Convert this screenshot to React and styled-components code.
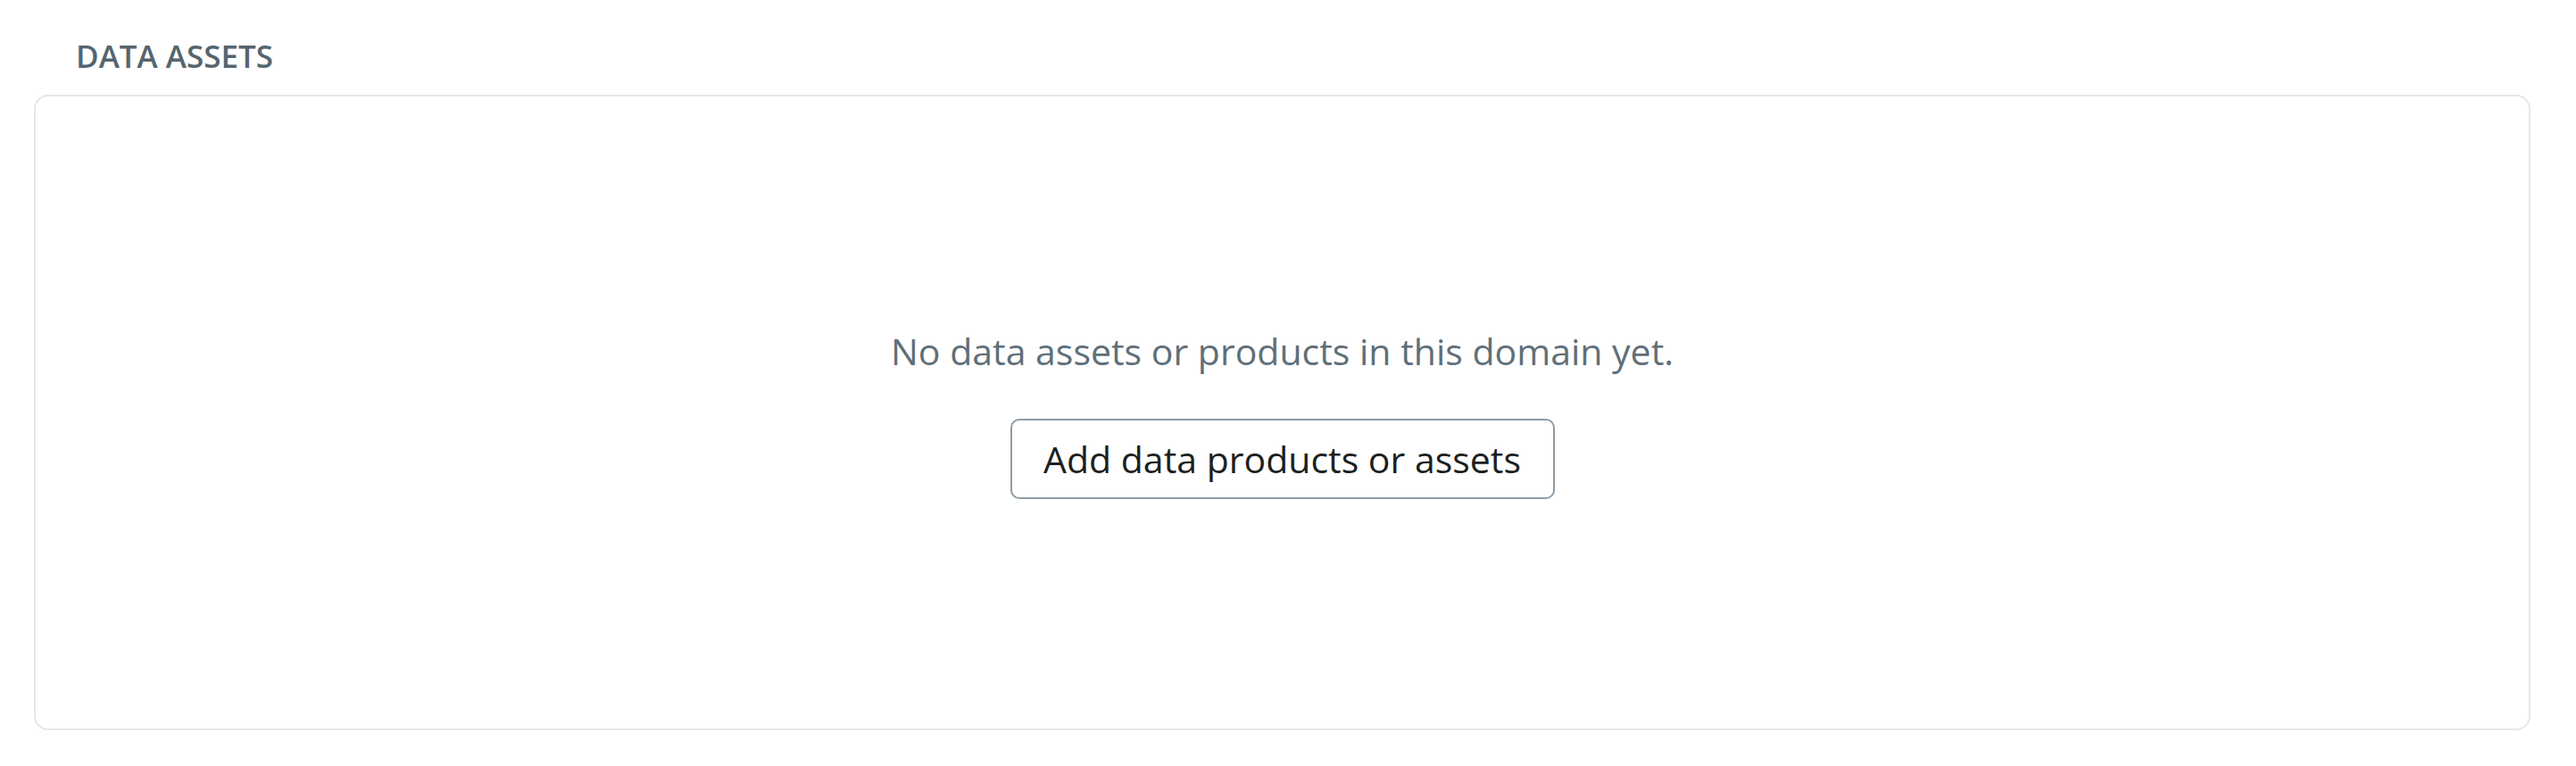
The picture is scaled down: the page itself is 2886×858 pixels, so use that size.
import React from 'react'
import styled, { createGlobalStyle } from 'styled-components'

const GlobalStyle = createGlobalStyle`
  html, body {
    margin: 0;
    padding: 0;
    background: #ffffff;
  }
  body {
    font-family: 'Open Sans', 'Noto Sans', sans-serif;
  }
`

const Page = styled.div`
  padding: 40px 51px 40px 38px;
`

const Heading = styled.h2`
  margin: 0 0 20px 47px;
  font-size: 35px;
  line-height: 46px;
  font-weight: 600;
  color: #55656f;
  letter-spacing: 0;
`

const Card = styled.section`
  box-sizing: border-box;
  height: 712px;
  border: 2px solid #e4e6e8;
  border-radius: 16px;
  display: flex;
  flex-direction: column;
  align-items: center;
  justify-content: center;
  gap: 48px;
`

const Message = styled.p`
  margin: 0;
  font-size: 41px;
  line-height: 56px;
  color: #5f6f79;
`

const Button = styled.button`
  box-sizing: border-box;
  width: 610px;
  height: 90px;
  border: 2px solid #8e9ca6;
  border-radius: 10px;
  background: #ffffff;
  font-family: inherit;
  font-size: 41px;
  color: #1c1f21;
  cursor: pointer;
`

export default function App () {
  return <>
    <GlobalStyle />
    <Page>
      <Heading>DATA ASSETS</Heading>
      <Card>
        <Message>No data assets or products in this domain yet.</Message>
        <Button>Add data products or assets</Button>
      </Card>
    </Page>
  </>
}
